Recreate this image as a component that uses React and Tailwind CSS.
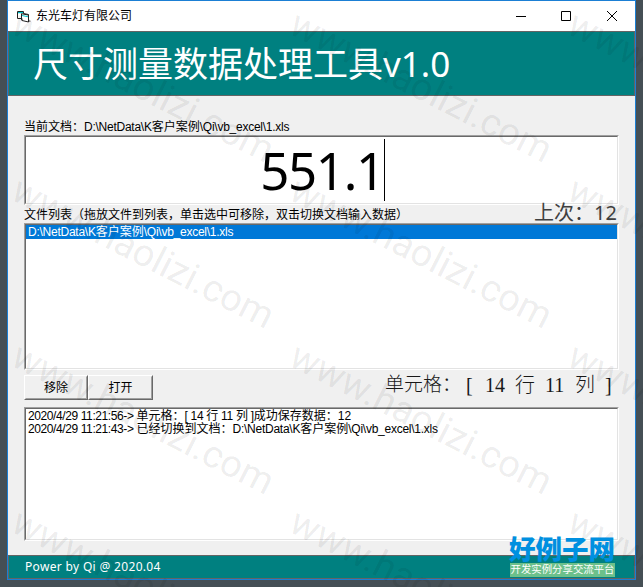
import React, { useState } from "react";

const FILE_PATH = ["D:\\NetData\\K", "客户案例", "\\Qi\\vb_excel\\1.xls"];

const WATERMARKS = [
  "left-[15px] top-[-1px]",
  "left-[293px] top-[-1px]",
  "left-[571px] top-[-1px]",
  "left-[15px] top-[165px]",
  "left-[293px] top-[165px]",
  "left-[571px] top-[165px]",
  "left-[15px] top-[331px]",
  "left-[293px] top-[331px]",
  "left-[571px] top-[331px]",
  "left-[15px] top-[497px]",
  "left-[293px] top-[497px]",
  "left-[571px] top-[497px]",
];

const FilePath = () => (
  <span>
    <span className="tracking-[-0.25px]">{FILE_PATH[0]}</span>
    <span>{FILE_PATH[1]}</span>
    <span className="tracking-[-0.25px]">{FILE_PATH[2]}</span>
  </span>
);

const Sunken = ({ className, children }) => (
  <div className={`border border-t-[#a0a0a0] border-l-[#a0a0a0] border-r-white border-b-white ${className}`}>
    <div className="h-full border border-t-[#696969] border-l-[#696969] border-r-[#e3e3e3] border-b-[#e3e3e3] bg-white">
      {children}
    </div>
  </div>
);

const PushButton = ({ className, children, onClick }) => (
  <button
    onClick={onClick}
    className={`h-[25px] border border-t-white border-l-white border-r-[#696969] border-b-[#696969] ${className}`}
  >
    <span className="flex h-full items-center justify-center border border-t-[#f0f0f0] border-l-[#f0f0f0] border-r-[#a0a0a0] border-b-[#a0a0a0]">
      {children}
    </span>
  </button>
);

const TitleBar = () => (
  <div className="flex h-[30px] items-center bg-white">
    <svg className="ml-[9px] h-[13px] w-[14px]" viewBox="0 0 14 13">
      <path d="M.5 1.5h6v2l5 1v7.500l-6.500-1.500V8.500H.5z" fill="#fff" stroke="#222" />
      <path d="M1 2h5v1.300H1zM5 5l6 1.200v1L5 6z" fill="#00c0c8" />
      <path d="M4.500 3.700v6.500M4.500 3.700l7 1.400" fill="none" stroke="#222" />
      <path d="M12 9.500l1.500 1v1.500H12z" fill="#999" />
    </svg>
    <span className="ml-[5px] flex-1 text-[12px] leading-[18px]">东光车灯有限公司</span>
    <svg className="mr-[16px] h-[12px] w-[104px]" viewBox="0 0 104 12" fill="none" stroke="#000">
      <path d="M1 6.5h10" />
      <path d="M46.5 1.5h9v9h-9z" />
      <path d="M92 1l10 10M102 1L92 11" />
    </svg>
  </div>
);

const App = () => {
  const [files, setFiles] = useState([FILE_PATH]);

  return (
    <div className="relative h-[587px] w-[643px] overflow-hidden bg-[#454f55] pl-[7px] font-['Liberation_Sans','Noto_Sans_CJK_SC',sans-serif] text-[12px] text-black">
      <div className="flex h-[580px] w-[629px] flex-col border border-[#1b7fd4] bg-[#f0f0f0]">
        <TitleBar />

        <div className="flex h-[65px] shrink-0 items-center border border-[#646464] bg-[#008080] pl-[24px] text-white">
          <h1 className="-mt-px font-['Noto_Sans_CJK_SC',sans-serif] text-[35px] leading-[60px] font-normal">
            尺寸测量数据处理工具
            <span className="font-['Noto_Sans','Noto_Sans_CJK_SC',sans-serif]">v1.0</span>
          </h1>
        </div>

        <div className="flex flex-1 flex-col px-[16px]">
          <div className="mt-[21px] h-[18px] leading-[20px] whitespace-nowrap">
            当前文档：
            <FilePath />
          </div>
          <Sunken className="h-[70px]">
            <div className="flex h-[66px] items-center justify-center pl-[2px] font-['Noto_Sans',sans-serif] text-[51px] leading-[66px] tracking-[-1.4px]">
              <span>551.1</span>
              <span className="h-[62px] w-px bg-black" />
            </div>
          </Sunken>

          <div className="flex h-[18px] justify-between whitespace-nowrap">
            <span className="leading-[20px]">文件列表（拖放文件到列表，单击选中可移除，双击切换文档输入数据）</span>
            <span className="pr-[2px] font-['Noto_Sans','Noto_Sans_CJK_SC',sans-serif] text-[20px] leading-[16px] text-[#404040]">
              上次：12
            </span>
          </div>
          <Sunken className="h-[147px]">
            {files.map((file, index) => (
              <div key={index} className="h-[14px] bg-[#0078d7] pl-[2px] leading-[14px] text-white">
                <FilePath />
              </div>
            ))}
          </Sunken>

          <div className="mt-[5px] flex h-[32px] justify-between">
            <div className="flex">
              <PushButton className="w-[64px]" onClick={() => setFiles([])}>移除</PushButton>
              <PushButton className="w-[65px]">打开</PushButton>
            </div>
            <div className="flex font-['Liberation_Serif','Noto_Sans_CJK_SC',serif] text-[20px] leading-[20px] font-light whitespace-nowrap text-[#181818]">
              <span className="w-[81px] text-[19px]">单元格：</span>
              <span className="w-[19px]">[</span>
              <span className="w-[30px]">14</span>
              <span className="w-[30px]">行</span>
              <span className="w-[30px]">11</span>
              <span className="w-[30px]">列</span>
              <span className="w-[14px]">]</span>
            </div>
          </div>

          <Sunken className="h-[134px]">
            <div className="pt-px pl-[2px] leading-[13px] whitespace-nowrap">
              <div>
                <span className="tracking-[-0.4px]">2020/4/29 11:21:56-&gt; </span>
                单元格：<span className="tracking-[-0.3px]">[ 14 行 11 列 ]</span>成功保存数据：12
              </div>
              <div>
                <span className="tracking-[-0.4px]">2020/4/29 11:21:43-&gt; </span>
                已经切换到文档：
                <FilePath />
              </div>
            </div>
          </Sunken>
        </div>

        <div className="h-[24px] shrink-0 border border-[#646464] bg-[#008080] pl-[16px] font-['Noto_Sans',sans-serif] text-[12px] leading-[22px] tracking-[0.33px] text-white">
          Power by Qi @ 2020.04
        </div>
      </div>

      {/* site watermark */}
      {WATERMARKS.map((position) => (
        <span
          key={position}
          className={`pointer-events-none absolute origin-left rotate-[27deg] font-['Roboto',sans-serif] text-[38px] leading-[44px] whitespace-nowrap text-black/8 ${position}`}
        >
          www.haolizi.com
        </span>
      ))}

      <div className="absolute top-[532px] left-[509px] w-[106px] whitespace-nowrap">
        <div className="font-['Noto_Sans_CJK_SC',sans-serif] text-[26.5px] leading-[31px] font-black text-[#0090e0]">
          好例子网
        </div>
        <div className="ml-px h-[14px] bg-[#6cc08b] text-center text-[10.4px] leading-[14px] text-white">开发实例分享交流平台</div>
      </div>
    </div>
  );
};

export default App;
